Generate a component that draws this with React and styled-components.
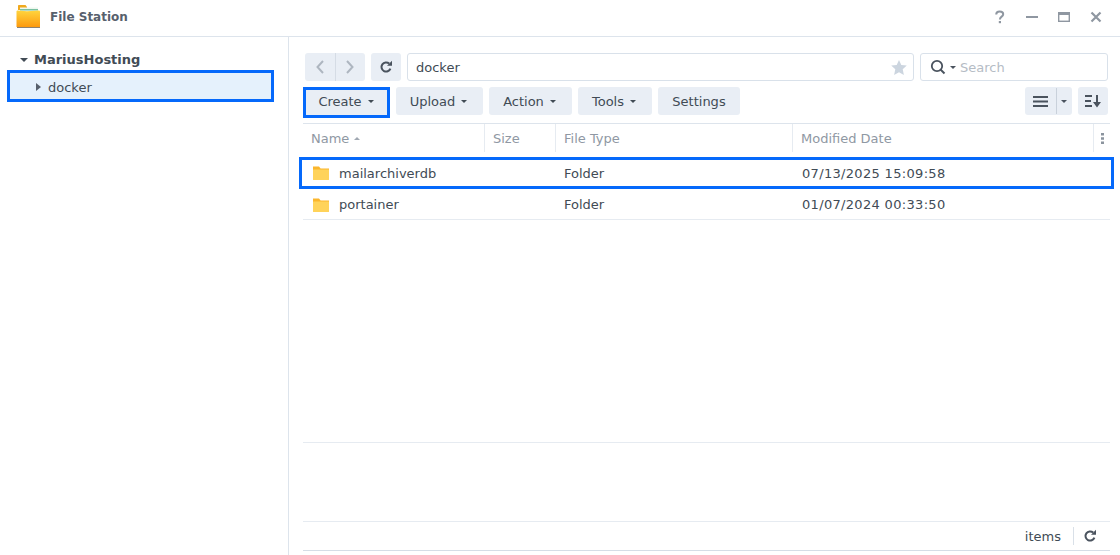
import React from "react";
import styled, { createGlobalStyle } from "styled-components";

const Global = createGlobalStyle`
  html, body { margin: 0; padding: 0; background: #fff; }
  body { font-family: "DejaVu Sans", sans-serif; font-size: 13px; color: #414b55; overflow: hidden; }
  * { box-sizing: border-box; }
`;

const BLUE = "#0569fb";

const Win = styled.div`
  width: 1120px; height: 555px; display: flex; flex-direction: column; background: #fff; overflow: hidden;
`;
const TitleBar = styled.header`
  height: 37px; flex: none; display: flex; align-items: center; padding: 0 16px 2px;
  border-bottom: 1px solid #dde4ec;
`;
const AppTitle = styled.h1`
  margin: 0 0 0 8px; font-size: 12px; font-weight: 700; color: #57606c; flex: 1;
`;
const WinBtns = styled.div`
  display: flex; align-items: center; gap: 12px; margin-right: -2px;
`;
const WinBtn = styled.span`
  width: 20px; height: 20px; display: flex; align-items: center; justify-content: center;
`;
const Body = styled.div`
  flex: 1; display: flex; min-height: 0;
`;
const Side = styled.aside`
  width: 289px; flex: none; border-right: 1px solid #dde4ec; padding: 12px 14px 0 7px;
`;
const RootNode = styled.div`
  height: 21px; display: flex; align-items: center; padding-left: 13px; gap: 6px;
  font-weight: 700; color: #414b55;
`;
const TreeNode = styled.div`
  height: 32px; display: flex; align-items: center; padding: 2px 0 0 26px; gap: 7px;
  background: #e5f1fc; border: 3px solid ${BLUE}; color: #414b55;
`;
const Main = styled.main`
  flex: 1; min-width: 0; display: flex; flex-direction: column; padding: 16px 10px 4px 14px;
`;
const TopRow = styled.div`
  display: flex; gap: 6px; height: 28px; padding: 0 2px; flex: none;
`;
const NavGroup = styled.div`
  display: flex; width: 60px; height: 28px; background: #e9eef5; border-radius: 3px;
`;
const NavBtn = styled.span`
  flex: 1; display: flex; align-items: center; justify-content: center; color: #aeb6c0;
  & + & { border-left: 1px solid #d5dce5; }
`;
const IconBtn = styled.span`
  width: 30px; height: 28px; flex: none; display: flex; align-items: center; justify-content: center;
  background: #e9eef5; border-radius: 3px; color: #4a535e;
`;
const Field = styled.div`
  flex: ${(p) => (p.$w ? "none" : 1)}; width: ${(p) => (p.$w ? `${p.$w}px` : "auto")};
  height: 28px; border: 1px solid #d9e1ea; border-radius: 3px; display: flex; align-items: center;
  padding: 0 8px; gap: 5px;
`;
const PathText = styled.span`
  flex: 1; color: #414b55;
`;
const Placeholder = styled.span`
  color: #b5bcc5; margin-left: -1px;
`;
const ToolRow = styled.div`
  display: flex; align-items: flex-start; gap: 6px; height: 36px; margin-top: 6px; flex: none; padding-right: 2px;
`;
const Btn = styled.button`
  height: ${(p) => (p.$focus ? 31 : 28)}px; width: ${(p) => p.$w}px; flex: none;
  margin: 0; padding: 0 0 ${(p) => (p.$focus ? 3 : 0)}px; display: flex; align-items: center; justify-content: center; gap: 5px;
  font: inherit; color: #414b55;
  background: #e9eef5; border: ${(p) => (p.$focus ? `3px solid ${BLUE}` : "0")};
  border-radius: ${(p) => (p.$focus ? 0 : 3)}px;
`;
const Caret = styled.i`
  width: 0; height: 0; display: inline-block; flex: none;
  border-left: 3px solid transparent; border-right: 3px solid transparent;
  border-${(p) => (p.$up ? "bottom" : "top")}: 3px solid ${(p) => p.$c || "#414b55"};
`;
const BtnCaret = styled(Caret)`
  margin-left: 1px; margin-right: ${(p) => p.$end ?? 2}px;
`;
const RootCaret = styled(Caret)`
  border-left-width: 4px; border-right-width: 4px; border-top-width: 4px;
`;
const Spacer = styled.div` flex: 1; `;
const ViewGroup = styled.div`
  display: flex; width: 47px; height: 28px; background: #e9eef5; border-radius: 3px; align-items: center;
`;
const ViewMain = styled.span`
  width: 32px; height: 26px; display: flex; align-items: center; justify-content: center;
  border-right: 1px solid #c9d1db;
`;
const ViewDrop = styled.span`
  flex: 1; display: flex; justify-content: center; align-items: center; padding-right: 1px;
`;
const Grid = styled.div`
  display: grid; grid-template-columns: 182px 71px 237px 301px 16px;
`;
const HeadRow = styled(Grid)`
  height: 30px; flex: none; border-top: 1px solid #dde4ec; color: #8f98a3;
`;
const HeadCell = styled.div`
  display: flex; align-items: center; gap: 5px; padding-left: 8px; height: 28px;
  border-right: 1px solid #e6ebf1;
  &:last-child { border-right: 0; padding-left: 7px; }
`;
const Rows = styled.div`
  flex: 1; min-height: 0; padding-top: 4px; border-bottom: 1px solid #e6ebf1;
`;
const Row = styled(Grid)`
  height: ${(p) => (p.$selected ? 32 : 31)}px; align-items: center;
  margin: 0 ${(p) => (p.$selected ? "-4px" : "0")};
  padding: ${(p) => (p.$selected ? "0 1px" : "1px 0 0")};
  border-style: solid;
  border-width: ${(p) => (p.$selected ? "3px" : "0 0 1px")};
  border-color: ${(p) => (p.$selected ? BLUE : "#e6ebf1")};
  color: #414b55;
`;
const NameCell = styled.div`
  display: flex; align-items: center; gap: 9px; padding-left: 9px;
`;
const Cell = styled.div`
  padding-left: 8px;
`;
const DateCell = styled.div`
  padding-left: 9px; letter-spacing: 0.32px;
`;
const Preview = styled.div`
  height: 79px; flex: none; border-bottom: 1px solid #e6ebf1;
`;
const Status = styled.footer`
  height: 29px; flex: none; display: flex; align-items: center; justify-content: flex-end;
  border-bottom: 1px solid #d5dde6; padding-right: 13px;
`;
const StatusDivider = styled.span`
  width: 1px; height: 18px; background: #d9e0e8; margin: 0 9px 0 12px;
`;

const Folder = () => (
  <svg width="18" height="16" viewBox="0 0 18 16" aria-hidden="true">
    <path d="M1 1.500h6l1.600 2H17V6H1z" fill="#fbb62c" />
    <rect x="1" y="4.500" width="16" height="10.500" rx="0.500" fill="#ffd35a" />
  </svg>
);
const AppIcon = () => (
  <svg width="26" height="26" viewBox="0 0 26 26" aria-hidden="true">
    <defs>
      <linearGradient id="ff" x1="0" y1="0" x2="0" y2="1">
        <stop offset="0" stopColor="#ffd53e" />
        <stop offset="1" stopColor="#fd9a0e" />
      </linearGradient>
    </defs>
    <path d="M2 6V2c0-.6.400-1 1-1h6.500l1.500 2v3z" fill="#f0a91e" />
    <rect x="4" y="3.500" width="18" height="4" fill="#eef7ee" />
    <rect x="4" y="5" width="18" height="1.500" fill="#79c0a0" />
    <path d="M.5 7.500C.5 6.700 1 6.400 1.700 6.400L11 7.200l11.800-.8c.7 0 1.200.4 1.200 1.100V23H.5z" fill="url(#ff)" />
    <rect x="1" y="23" width="23" height="1" fill="#8d8270" />
  </svg>
);
const Refresh = ({ c = "#4a535e" }) => (
  <svg width="14" height="14" viewBox="0 0 14 14" fill="none" aria-hidden="true">
    <path d="M11.400 8.600A4.600 4.600 0 1 1 10.200 3.600" stroke={c} strokeWidth="2" />
    <path d="M8 5.800h5V.8z" fill={c} />
  </svg>
);
const Arrow = ({ d }) => (
  <svg width="10" height="16" viewBox="0 0 10 16" fill="none" aria-hidden="true">
    <path d={d} stroke="currentColor" strokeWidth="2" />
  </svg>
);

const rows = [
  { name: "mailarchiverdb", date: "07/13/2025 15:09:58", selected: true },
  { name: "portainer", date: "01/07/2024 00:33:50" },
];

export default function App() {
  return (
    <>
      <Global />
      <Win>
        <TitleBar>
          <AppIcon />
          <AppTitle>File Station</AppTitle>
          <WinBtns>
            <WinBtn>
              <svg width="12" height="14" viewBox="0 0 12 14" fill="none" aria-hidden="true">
                <path d="M2.200 4.500C2.200 2.500 3.800 1.500 5.700 1.500S9.200 2.600 9.200 4.200c0 2.600-3.300 2.300-3.300 5.200" stroke="#8f97a1" strokeWidth="2" />
                <rect x="4.800" y="11" width="2.200" height="2.200" fill="#8f97a1" />
              </svg>
            </WinBtn>
            <WinBtn>
              <svg width="14" height="14" viewBox="0 0 14 14" aria-hidden="true">
                <rect x="1" y="6" width="12" height="2" fill="#8f97a1" />
              </svg>
            </WinBtn>
            <WinBtn>
              <svg width="14" height="14" viewBox="0 0 14 14" fill="none" aria-hidden="true">
                <rect x="1.700" y="2.700" width="10.600" height="8.600" stroke="#8f97a1" strokeWidth="1.400" />
                <rect x="1" y="2" width="12" height="3" fill="#8f97a1" />
              </svg>
            </WinBtn>
            <WinBtn>
              <svg width="14" height="14" viewBox="0 0 14 14" fill="none" aria-hidden="true">
                <path d="M2.500 2.500l9 9M11.500 2.500l-9 9" stroke="#8f97a1" strokeWidth="2.200" />
              </svg>
            </WinBtn>
          </WinBtns>
        </TitleBar>
        <Body>
          <Side>
            <RootNode><RootCaret />MariusHosting</RootNode>
            <TreeNode>
              <svg width="5" height="8" viewBox="0 0 5 8" aria-hidden="true"><path d="M0 0l5 4-5 4z" fill="#57606c" /></svg>
              docker
            </TreeNode>
          </Side>
          <Main>
            <TopRow>
              <NavGroup>
                <NavBtn><Arrow d="M8 2L2.500 8 8 14" /></NavBtn>
                <NavBtn><Arrow d="M2 2l5.500 6L2 14" /></NavBtn>
              </NavGroup>
              <IconBtn><Refresh /></IconBtn>
              <Field>
                <PathText>docker</PathText>
                <svg width="16" height="15" viewBox="0 0 16 15" aria-hidden="true" style={{ marginRight: -2 }}>
                  <path d="M8 0l2.300 5 5.500.6-4.100 3.700L12.900 15 8 12.200 3.100 15l1.200-5.700L.2 5.600 5.700 5z" fill="#ccd5df" />
                </svg>
              </Field>
              <Field $w={188}>
                <svg width="16" height="16" viewBox="0 0 16 16" fill="none" aria-hidden="true" style={{ marginLeft: 1, marginRight: -1 }}>
                  <circle cx="7" cy="7" r="5.200" stroke="#4a535e" strokeWidth="1.800" />
                  <path d="M10.500 10.500L14.500 14.500" stroke="#4a535e" strokeWidth="2" />
                </svg>
                <Caret $c="#4a535e" />
                <Placeholder>Search</Placeholder>
              </Field>
            </TopRow>
            <ToolRow>
              <Btn $w={87} $focus>Create<BtnCaret $end={1} /></Btn>
              <Btn $w={87}>Upload<BtnCaret /></Btn>
              <Btn $w={83}>Action<BtnCaret /></Btn>
              <Btn $w={74}>Tools<BtnCaret /></Btn>
              <Btn $w={82}>Settings</Btn>
              <Spacer />
              <ViewGroup>
                <ViewMain>
                  <svg width="15" height="11" viewBox="0 0 15 11" aria-hidden="true">
                    <path d="M0 0h15v2H0zM0 4.500h15v2H0zM0 9h15v2H0z" fill="#4a535e" />
                  </svg>
                </ViewMain>
                <ViewDrop><Caret $c="#4a535e" /></ViewDrop>
              </ViewGroup>
              <IconBtn>
                <svg width="16" height="14" viewBox="0 0 16 14" aria-hidden="true">
                  <path d="M0 1h7v2H0zM0 6h6v2H0zM0 11h7v2H0zM11 1h2v7h3l-4 5.500L8 8h3z" fill="#4a535e" />
                </svg>
              </IconBtn>
            </ToolRow>
            <HeadRow>
              <HeadCell>Name<Caret $up $c="#a0a8b2" /></HeadCell>
              <HeadCell>Size</HeadCell>
              <HeadCell>File Type</HeadCell>
              <HeadCell>Modified Date</HeadCell>
              <HeadCell>
                <svg width="3" height="11" viewBox="0 0 3 11" aria-hidden="true">
                  <path d="M0 0h3v2.500H0zM0 4.200h3v2.500H0zM0 8.400h3v2.500H0z" fill="#8b949e" />
                </svg>
              </HeadCell>
            </HeadRow>
            <Rows>
              {rows.map((r) => (
                <Row key={r.name} $selected={r.selected}>
                  <NameCell><Folder />{r.name}</NameCell>
                  <Cell />
                  <Cell>Folder</Cell>
                  <DateCell>{r.date}</DateCell>
                  <Cell />
                </Row>
              ))}
            </Rows>
            <Preview />
            <Status>
              items
              <StatusDivider />
              <Refresh />
            </Status>
          </Main>
        </Body>
      </Win>
    </>
  );
}
